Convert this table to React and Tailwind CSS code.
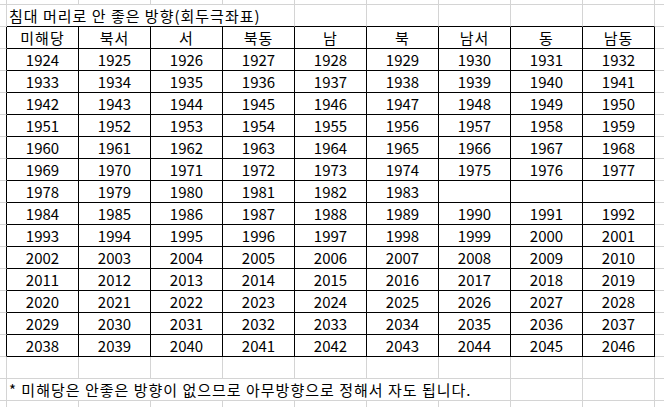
import React from "react";

const G = "border-[#d4d4d4]";

function Cell({ w, r = "g", b = "g", align = "center", track = false, children }) {
  const rc = r === "k" ? "border-r-black" : r === "n" ? "border-r-0" : "border-r-[#d4d4d4]";
  const bc = b === "k" ? "border-b-black" : "border-b-[#d4d4d4]";
  const al = align === "left" ? "justify-start pl-[2px]" : "justify-center";
  const tr = track ? "tracking-[1px]" : "";
  return (
    <div className={`${w} shrink-0 box-border h-full flex items-center whitespace-nowrap border-r border-b ${rc} ${bc} ${al} ${tr}`}>
      {children}
    </div>
  );
}

function Row({ h = "h-[22px]", children }) {
  return <div className={`flex ${h} w-full`}>{children}</div>;
}

const COLS = Array.from({ length: 9 });

function GrayRow({ h }) {
  return (
    <Row h={h}>
      <Cell w="w-[7px]" />
      {COLS.map((_, i) => (
        <Cell key={i} w="w-[72px]" />
      ))}
      <div className={`flex-1 h-full box-border border-b ${G}`} />
    </Row>
  );
}

const header = ["미해당", "북서", "서", "북동", "남", "북", "남서", "동", "남동"];

function range(a, n) {
  return Array.from({ length: n }, (_, i) => String(a + i));
}

const data = [
  range(1924, 9),
  range(1933, 9),
  range(1942, 9),
  range(1951, 9),
  range(1960, 9),
  range(1969, 9),
  [...range(1978, 6), "", "", ""],
  range(1984, 9),
  range(1993, 9),
  range(2002, 9),
  range(2011, 9),
  range(2020, 9),
  range(2029, 9),
  range(2038, 9),
];

function TableRow({ cells, track }) {
  return (
    <Row>
      <Cell w="w-[7px]" r="k" />
      {cells.map((c, i) => (
        <Cell key={i} w="w-[72px]" r="k" b="k" track={track}>
          {c}
        </Cell>
      ))}
      <div className={`flex-1 h-full box-border border-b ${G}`} />
    </Row>
  );
}

export default function App() {
  return (
    <div
      className="w-[664px] h-[407px] overflow-hidden bg-white text-black text-[15px] leading-none"
      style={{ fontFamily: '"Noto Sans CJK KR", "Noto Sans", sans-serif' }}
    >
      <GrayRow h="h-[5px]" />
      <Row>
        <Cell w="w-[7px]" />
        <Cell w="w-[288px]" b="k" align="left" track>
          침대 머리로 안 좋은 방향(회두극좌표)
        </Cell>
        {COLS.slice(4).map((_, i) => (
          <Cell key={i} w="w-[72px]" b="k" />
        ))}
        <div className={`flex-1 h-full box-border border-b ${G}`} />
      </Row>
      <TableRow cells={header} track />
      {data.map((r, i) => (
        <TableRow key={i} cells={r} />
      ))}
      <GrayRow h="h-[22px]" />
      <Row>
        <Cell w="w-[7px]" />
        <Cell w="w-[504px]" align="left" track>
          * 미해당은 안좋은 방향이 없으므로 아무방향으로 정해서 자도 됩니다.
        </Cell>
        <Cell w="w-[72px]" />
        <Cell w="w-[72px]" />
        <div className={`flex-1 h-full box-border border-b ${G}`} />
      </Row>
      <GrayRow h="h-[7px]" />
    </div>
  );
}
